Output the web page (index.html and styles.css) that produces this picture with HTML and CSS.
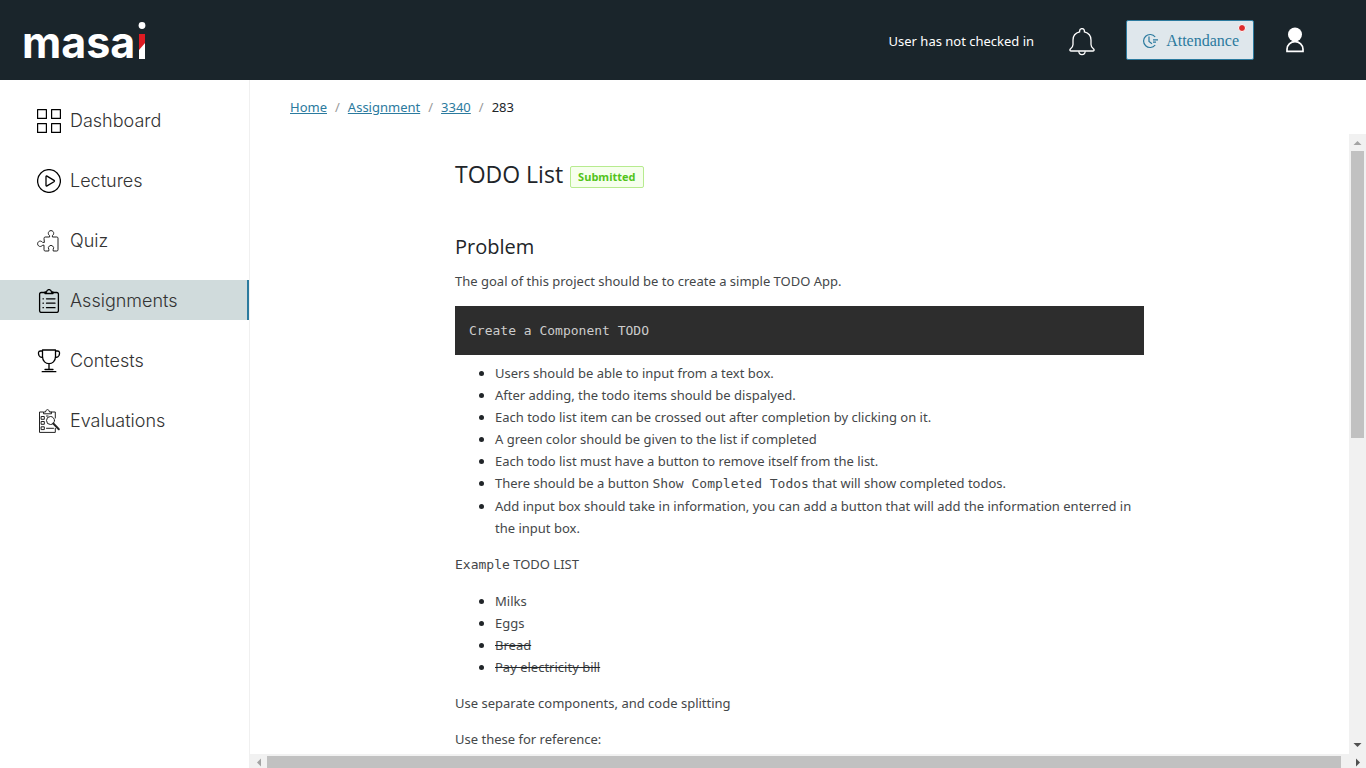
FILE: index.html
```html
<!DOCTYPE html>
<html lang="en">
<head>
<meta charset="utf-8">
<title>TODO List - Masai</title>
<link rel="stylesheet" href="styles.css">
</head>
<body>
<header class="topbar">
  <a class="logo" href="#" aria-label="masai">
    <span class="logo-text">masa</span>
    <svg class="logo-mark" width="8" height="38" viewBox="0 0 8 38"><circle cx="4" cy="3.5" r="3.4" fill="#fff"/><path d="M1 12h6v9L1 30z" fill="#de1b22"/><path d="M7 21v16H1v-9z" fill="#fff"/></svg>
  </a>
  <div class="actions">
    <span class="status">User has not checked in</span>
    <button class="icon-button bell" aria-label="Notifications">
      <svg width="26" height="28" viewBox="0 0 26 28" fill="none" stroke="#fff" stroke-width="1.3" stroke-linejoin="round"><path d="M10.6 3.9V3a2.4 2.4 0 0 1 4.8 0v.9c4 1 6.6 4.200 6.600 8.100v4.500c0 2.300 1.200 3.300 2.400 4.200 1.200 1 .9 2.300-.8 2.300H2.400c-1.700 0-2-1.300-.8-2.300C2.800 19.800 4 18.800 4 16.500V12c0-3.900 2.600-7.100 6.600-8.100z"/><path d="M9.800 23.200c.3 4.500 6.100 4.500 6.400 0"/></svg>
    </button>
    <button class="attendance">
      <svg width="16" height="16" viewBox="0 0 16 16" fill="none" stroke="#2b7a9e" stroke-width="1.200"><path d="M13.200 4A6.500 6.500 0 1 0 13.200 12"/><path d="M7 3.500v5l3 2.200M11 6.800h5M11 9.200h3"/></svg>
      <span>Attendance</span>
      <i class="alert-dot"></i>
    </button>
    <button class="icon-button" aria-label="Profile">
      <svg width="20" height="26" viewBox="0 0 20 26"><circle cx="10" cy="7.500" r="7" fill="#fff"/><path d="M2 24.300v-2a8 7.600 0 0 1 16 0v2z" fill="#1a252b" stroke="#fff" stroke-width="1.700"/></svg>
    </button>
  </div>
</header>
<div class="layout">
  <nav class="sidebar">
    <a class="nav-item" href="#"><svg viewBox="0 0 24 24"><path stroke-width="1.200" d="M.6.600h8.800v8.800H.6zM14.600.6h8.800v8.800h-8.800zM.6 14.600h8.800v8.800H.6zM14.600 14.600h8.800v8.800h-8.800z"/></svg>Dashboard</a>
    <a class="nav-item" href="#"><svg viewBox="0 0 24 24"><circle cx="12" cy="12" r="11.400"/><path d="M9 7.700v8.600q0 1.100 1 .6l7-4.200q.9-.7 0-1.300L10 7.100q-1-.5-1 .6z"/></svg>Lectures</a>
    <a class="nav-item" href="#"><svg viewBox="0 0 24 24" class="soft"><path d="M7 9.200q0-1.200 1.200-1.200h4.400V6.600a2.700 2.700 0 1 1 2.800 0V8h4.400q1.200 0 1.200 1.200v11.600q0 1.200-1.200 1.200h-3.600v-1.600a2.600 2.600 0 1 0-4.400 0V22H8.200Q7 22 7 20.800v-4.600H5.600a2.700 2.700 0 1 1 0-2.800H7z"/></svg>Quiz</a>
    <a class="nav-item active" href="#"><svg viewBox="0 0 24 24"><path d="M8 3.500H4.200Q2.600 3.500 2.600 5v16.800q0 1.600 1.600 1.600h15.600q1.600 0 1.600-1.600V5q0-1.500-1.600-1.500H16M8 4.500V3h1.500c.5-3.200 4.500-3.200 5 0H16v1.500zM9.500 9.800H18M9.500 14.200H18M9.500 18.700H18M6 9.800h.4M6 14.200h.4M6 18.700h.4"/></svg>Assignments</a>
    <a class="nav-item" href="#"><svg viewBox="0 0 24 24"><path d="M5.500 1h13v6.500c0 9.500-13 9.500-13 0zM5.500 2H3.400C1 2 1.200 4.500 2 6.500c.6 1.400 1.800 2 3.500 2M18.500 2h2.100c2.400 0 2.200 2.500 1.400 4.500-.6 1.400-1.800 2-3.500 2M12 14.700v5.500M8 20.500h8M5.200 22.700h13.600"/></svg>Contests</a>
    <a class="nav-item" href="#"><svg viewBox="0 0 24 24" class="soft"><path d="M6 3H2.500v20.400h15.800v-4M14 3h4.300v6M6.500 4.400V3h2c.6-3.200 3.400-3.200 4 0h2v1.400zM4.500 7.500h2.800v2.800H4.500zM4.500 12.500h2.800v2.800H4.500zM4.500 17.800h2.800v2.800H4.500zM9.500 7h1.500M9.500 19.300h7"/><circle cx="13.500" cy="11.500" r="4"/><path stroke-width="2" d="M16.300 14.500l5.500 5.700"/></svg>Evaluations</a>
  </nav>
  <main class="main">
    <nav class="breadcrumb" aria-label="Breadcrumb">
      <a href="#">Home</a><span class="sep">/</span><a href="#">Assignment</a><span class="sep">/</span><a href="#">3340</a><span class="sep">/</span><span>283</span>
    </nav>
    <div class="scroll-area">
      <div class="viewport">
        <article class="article">
          <h1 class="title">TODO List <span class="tag">Submitted</span></h1>
          <h2 class="subtitle">Problem</h2>
          <p>The goal of this project should be to create a simple TODO App.</p>
          <pre><code>Create a Component TODO</code></pre>
          <ul>
            <li>Users should be able to input from a text box.</li>
            <li>After adding, the todo items should be dispalyed.</li>
            <li>Each todo list item can be crossed out after completion by clicking on it.</li>
            <li>A green color should be given to the list if completed</li>
            <li>Each todo list must have a button to remove itself from the list.</li>
            <li>There should be a button <code>Show Completed Todos</code> that will show completed todos.</li>
            <li>Add input box should take in information, you can add a button that will add the information enterred in the input box.</li>
          </ul>
          <p><code>Example</code> TODO LIST</p>
          <ul>
            <li>Milks</li>
            <li>Eggs</li>
            <li><del>Bread</del></li>
            <li><del>Pay electricity bill</del></li>
          </ul>
          <p>Use separate components, and code splitting</p>
          <p>Use these for reference:</p>
        </article>
      </div>
      <div class="scroll-y">
        <svg class="arrow muted" viewBox="0 0 17 17"><path d="M4.500 11h8L8.500 7z"/></svg>
        <div class="track-y"><div class="thumb-y"></div></div>
        <svg class="arrow" viewBox="0 0 17 17"><path d="M4.500 6h8L8.500 10z"/></svg>
      </div>
      <div class="scroll-x">
        <svg class="arrow muted" viewBox="0 0 17 17"><path d="M11 4.500v8L7 8.500z"/></svg>
        <div class="thumb-x"></div>
        <svg class="arrow" viewBox="0 0 17 17"><path d="M7 4.500v8L11 8.500z"/></svg>
      </div>
    </div>
  </main>
</div>
</body>
</html>
```

FILE: styles.css
```css
* { box-sizing: border-box; }
body {
  margin: 0;
  height: 100vh;
  display: flex;
  flex-direction: column;
  overflow: hidden;
  background: #fff;
  color: #212529;
  font: 13px/22px "Noto Sans", "Open Sans", sans-serif;
}
button { font: inherit; cursor: pointer; }
.topbar {
  flex: none;
  height: 80px;
  padding: 0 61px 0 22px;
  display: flex;
  align-items: center;
  justify-content: space-between;
  background: #1a252b;
  color: #fff;
}
.logo {
  display: flex;
  align-items: flex-end;
  gap: 3px;
  padding-top: 2px;
  color: #fff;
  text-decoration: none;
}
.logo-text { font: 700 43px/36px Inter, sans-serif; }
.actions { display: flex; align-items: center; }
.status { padding-top: 2px; }
.icon-button {
  display: flex;
  padding: 0;
  border: 0;
  background: none;
}
.bell { margin: 3px 31px 0 35px; }
.attendance {
  position: relative;
  display: flex;
  align-items: center;
  gap: 8px;
  height: 40px;
  margin-right: 31px;
  padding: 2px 14px 0 15px;
  border: 1px solid #2b7a9e;
  border-radius: 2px;
  background: #dfe7ec;
  color: #2b7a9e;
  font: 16px/22px "Liberation Serif", serif;
}
.alert-dot {
  position: absolute;
  top: 3px;
  right: 7px;
  width: 8px;
  height: 8px;
  border: 1px solid #fff;
  border-radius: 50%;
  background: #de2b2b;
}
.layout { flex: 1; min-height: 0; display: flex; }
.sidebar {
  flex: none;
  width: 250px;
  padding-top: 20px;
  display: flex;
  flex-direction: column;
  gap: 20px;
  border-right: 1px solid #f0f0f0;
}
.nav-item {
  display: flex;
  align-items: center;
  gap: 9px;
  height: 40px;
  padding: 2px 0 0 37px;
  color: #333;
  font: 300 18px/24px Inter, sans-serif;
  text-decoration: none;
}
.nav-item svg {
  width: 24px;
  height: 24px;
  fill: none;
  stroke: #000;
  stroke-width: 1.3;
  stroke-linejoin: round;
  stroke-linecap: round;
}
.nav-item .soft { stroke-width: 1; stroke: #222; }
.active { background: #d0dbdc; border-right: 2px solid #2b7a9e; }
.main { flex: 1; min-width: 0; display: flex; flex-direction: column; }
.breadcrumb { padding: 16px 40px; display: flex; }
.breadcrumb a { color: #2b7a9e; }
.sep { margin: 0 8px; color: #999; }
.scroll-area {
  flex: 1;
  min-height: 0;
  display: grid;
  grid-template-columns: minmax(0, 1fr) 17px;
  grid-template-rows: minmax(0, 1fr) 14px;
}
.viewport { overflow: hidden; }
.article { width: 689px; max-width: 100%; margin: 0 auto; padding-top: 24px; color: #444749; }
.title,
.subtitle {
  color: #212529;
  font-family: "Open Sans", sans-serif;
  font-weight: 500;
  line-height: 32px;
}
.title {
  display: flex;
  align-items: center;
  gap: 7px;
  margin: 0 0 41px;
  font-size: 23px;
}
.tag {
  margin-top: 6px;
  padding: 0 7px;
  border: 1px solid #b7eb8f;
  border-radius: 2px;
  background: #f6ffed;
  color: #52c41a;
  font-size: 11px;
  line-height: 20px;
  font-weight: 700;
}
.subtitle { margin: 0 0 7px; font-size: 20px; }
p { margin: 0 0 14px; }
ul { margin: 0 0 14px; padding-left: 40px; }
li::marker { color: #212529; }
del { text-decoration-color: #212529; }
code { font: 13px/22px "DejaVu Sans Mono", monospace; }
pre {
  margin: 0 0 7px;
  padding: 14px;
  background: #2d2d2d;
  color: #ccc;
  line-height: 21px;
}
pre code { line-height: 21px; }
.scroll-y { display: flex; flex-direction: column; background: #f1f1f1; }
.arrow { flex: none; width: 17px; height: 17px; fill: #505050; }
.muted { fill: #a3a3a3; }
.track-y { flex: 1; padding: 0 2px; }
.thumb-y { height: 49%; background: #c1c1c1; }
.scroll-x {
  grid-column: 1 / -1;
  display: flex;
  background: #f1f1f1;
  overflow: hidden;
}
.thumb-x { flex: 1; margin: 2px 8px 0 0; background: #c1c1c1; }
```
